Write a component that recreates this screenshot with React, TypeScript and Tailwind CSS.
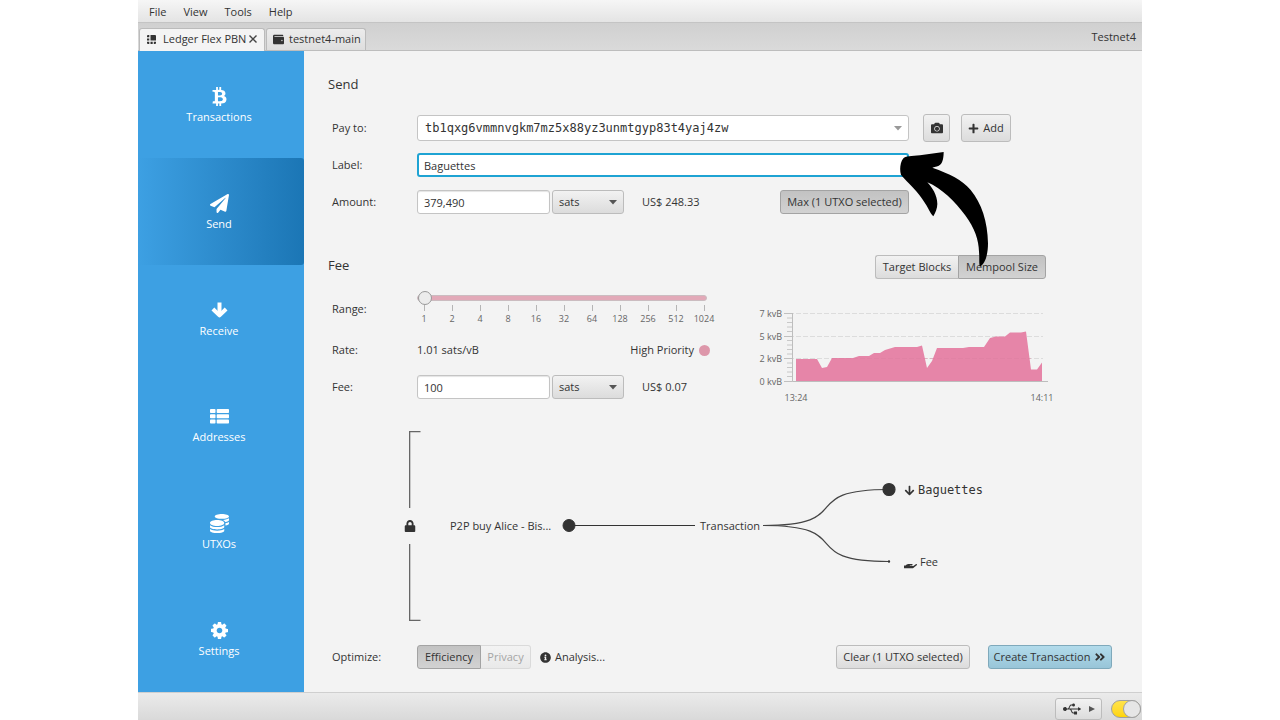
import { useState } from 'react';
import type { ReactNode } from 'react';
import {
  FaAngleDoubleRight,
  FaArrowDown,
  FaBtc,
  FaCamera,
  FaCoins,
  FaHandHolding,
  FaInfoCircle,
  FaLock,
  FaPaperPlane,
  FaPlus,
  FaUsb,
  FaWallet,
} from 'react-icons/fa';

const menus = ['File', 'View', 'Tools', 'Help'];

const navItems = [
  { label: 'Transactions', icon: <FaBtc size={19} /> },
  { label: 'Send', icon: <FaPaperPlane size={19} /> },
  { label: 'Receive', icon: <ReceiveIcon /> },
  { label: 'Addresses', icon: <ListIcon /> },
  { label: 'UTXOs', icon: <FaCoins size={19} /> },
  { label: 'Settings', icon: <CogIcon /> },
];

const feeRates = [1, 2, 4, 8, 16, 32, 64, 128, 256, 512, 1024];

const raised = 'border border-[#bcbcbc] bg-linear-to-b from-[#f2f2f2] to-[#dcdcdc]';
const pressed = 'border border-[#a3a3a3] bg-linear-to-b from-[#c2c2c2] to-[#d2d2d2]';
const field =
  'h-6 rounded-[3px] border border-[#c4c4c4] bg-white px-[6px] text-[#333] outline-none shadow-[inset_0_1px_1px_#e4e4e4]';

function Row({ label, htmlFor, children }: { label: string; htmlFor?: string; children: ReactNode }) {
  return (
    <div className="flex min-h-7 items-center">
      <label htmlFor={htmlFor} className="w-[85px] shrink-0">
        {label}
      </label>
      {children}
    </div>
  );
}

function UnitSelect({ label }: { label: string }) {
  return (
    <div className="relative ml-[2px] w-[72px]">
      <select aria-label={label} className={`h-6 w-full appearance-none rounded-[3px] px-[6px] outline-none ${raised}`}>
        <option>sats</option>
        <option>BTC</option>
      </select>
      <Caret className="pointer-events-none absolute top-[10px] right-[7px] text-[#555]" />
    </div>
  );
}

function Caret({ className }: { className?: string }) {
  return (
    <svg width="8" height="5" viewBox="0 0 8 5" fill="currentColor" className={className}>
      <path d="M0 0h8L4 4.5z" />
    </svg>
  );
}

function ReceiveIcon() {
  return (
    <svg width="17" height="19" viewBox="0 0 17 19" fill="none" stroke="currentColor" strokeWidth="4">
      <path d="M8.500 1.500V14" />
      <path d="M1.900 8L8.500 14.400L15.100 8" strokeLinejoin="round" />
    </svg>
  );
}

function ListIcon() {
  return (
    <svg width="19" height="19" viewBox="0 0 19 19" fill="currentColor">
      <rect x="0" y="2" width="5.500" height="4" rx=".8" />
      <rect x="6.700" y="2" width="12.300" height="4" rx=".8" />
      <rect x="0" y="7.300" width="5.500" height="4" rx=".8" />
      <rect x="6.700" y="7.300" width="12.300" height="4" rx=".8" />
      <rect x="0" y="12.600" width="5.500" height="4" rx=".8" />
      <rect x="6.700" y="12.600" width="12.300" height="4" rx=".8" />
    </svg>
  );
}

function CogIcon() {
  return (
    <svg width="17" height="19" viewBox="0 38 1536 1716" fill="currentColor">
      <path d="M1024 896q0-106-75-181t-181-75-181 75-75 181 75 181 181 75 181-75 75-181zm512-109v222q0 12-8 23t-20 13l-185 28q-19 54-39 91 35 50 107 138 10 12 10 25t-9 23q-27 37-99 108t-94 71q-12 0-26-9l-138-108q-44 23-91 38-16 136-29 186-7 28-36 28h-222q-14 0-24.500-8.500t-11.500-21.500l-28-184q-49-16-90-37l-141 107q-10 9-25 9-14 0-25-11-126-114-165-168-7-10-7-23 0-12 8-23 15-21 51-66.500t54-70.500q-27-50-41-99l-183-27q-13-2-21-12.500t-8-23.500v-222q0-12 8-23t19-13l186-28q14-46 39-92-40-57-107-138-10-12-10-24 0-10 9-23 26-36 98.500-107.500t94.500-71.500q13 0 26 10l138 107q44-23 91-38 16-136 29-186 7-28 36-28h222q14 0 24.500 8.500t11.500 21.500l28 184q49 16 90 37l142-107q9-9 24-9 13 0 25 10 129 119 165 170 7 8 7 22 0 12-8 23-15 21-51 66.500t-54 70.500q26 50 41 98l183 28q13 2 21 12.500t8 23.500z" />
    </svg>
  );
}

function DeviceIcon() {
  return (
    <svg width="9" height="9" viewBox="0 0 9 9" fill="#333">
      <path d="M3.500 0H8a1 1 0 0 1 1 1v4.500H3.500zM0 1a1 1 0 0 1 1-1h1.300v2.200H0zM0 3.400h2.300v2.200H0zM0 6.800h2.300V9H1a1 1 0 0 1-1-1zM3.500 6.800h2.200V9H3.500zM6.800 6.800H9V8a1 1 0 0 1-1 1H6.800z" />
    </svg>
  );
}

function PointerArrow() {
  return (
    <svg
      width="93"
      height="120"
      viewBox="528 150 279 360"
      className="pointer-events-none absolute -top-[3px] left-[479px] z-10"
    >
      <path d="M671 156C671 170 669 185 662 193C655 200 646 201 637 203C690 222 725 238 752 270C785 310 803 365 804 430C804 465 795 492 780 500C776 490 779 475 777 455C776 420 765 385 735 345C705 305 665 265 622 247C636 262 652 285 652 312C652 325 646 338 640 349C630 340 622 315 598 285C575 255 555 240 543 224C538 210 541 185 549 176C556 168 575 169 600 166Z" />
    </svg>
  );
}

function MempoolChart() {
  const ticks = [
    { y: 8, label: '7 kvB' },
    { y: 31, label: '5 kvB' },
    { y: 53, label: '2 kvB' },
    { y: 76, label: '0 kvB' },
  ];
  return (
    <svg width="300" height="100" viewBox="0 0 300 100" className="text-[9px]" fill="#666">
      {ticks.map((t) => (
        <g key={t.y}>
          <path d={`M34 ${t.y + 0.5}h254`} stroke="#dcdcdc" strokeDasharray="5 2" />
          <path d={`M29 ${t.y + 0.5}h8`} stroke="#c0c0c0" />
          <text x="27" y={t.y + 4} textAnchor="end">
            {t.label}
          </text>
        </g>
      ))}
      <path
        d="M32 13h5M32 17.500h5M32 22h5M32 26.500h5M32 35.500h5M32 40h5M32 44.500h5M32 49h5M32 58h5M32 62.500h5M32 67h5M32 71.500h5"
        stroke="#c8c8c8"
      />
      <path
        d="M41 76V54H62L67 63L72 62L77 53H98L104 51H114L119 48H125L130 45L140 42H162L167 40.500L172 63L177 56L182 43H208L214 42H229L235 33L241 31.500H250L255 27.500H266L271 26.500L276 64.500H282L287 57.500V76Z"
        fill="#e685a8"
      />
      <path d="M77 53.500H276" stroke="#dc7ea0" strokeDasharray="5 2" opacity="0.4" />
      <path d="M37.500 8V76.500H293" stroke="#bdbdbd" fill="none" />
      <text x="41" y="96" textAnchor="middle">
        13:24
      </text>
      <text x="287" y="96" textAnchor="middle">
        14:11
      </text>
    </svg>
  );
}

function TransactionDiagram() {
  return (
    <div className="mt-[26px] ml-[76px] flex h-[190px] items-center">
      <div className="flex h-full w-[18px] flex-col items-start justify-between">
        <svg width="18" height="77" fill="none" stroke="#666" strokeWidth="1.300">
          <path d="M16.500 .65H5.650V77" />
        </svg>
        <FaLock size={12} />
        <svg width="18" height="77" fill="none" stroke="#666" strokeWidth="1.300">
          <path d="M16.500 76.350H5.650V0" />
        </svg>
      </div>
      <span className="ml-7 w-[101px] whitespace-nowrap">P2P buy Alice - Bis...</span>
      <svg width="134" height="14" className="ml-[11px]" fill="#333" stroke="#333">
        <circle cx="7" cy="6.500" r="6" />
        <path d="M7 6.500H133" strokeWidth="1.200" />
      </svg>
      <span className="mx-1 w-[58px] whitespace-nowrap">Transaction</span>
      <svg width="134" height="88" viewBox="0 0 134 88" fill="none" stroke="#444" strokeWidth="1.200">
        <path d="M1 43.500C97 43.500 32 7.500 127 7.500" />
        <path d="M1 43.500C97 43.500 32 79.500 127 79.500" />
        <circle cx="127" cy="7.500" r="6" fill="#333" stroke="#333" />
        <circle cx="127" cy="79.500" r=".6" fill="#333" stroke="#333" />
      </svg>
      <div className="ml-2 flex flex-col gap-[54px]">
        <div className="flex h-[18px] items-center gap-[3px] font-['DejaVu_Sans_Mono',monospace] text-[12px]">
          <FaArrowDown size={11} />
          Baguettes
        </div>
        <div className="flex h-[18px] items-center gap-[3px]">
          <FaHandHolding size={13} />
          Fee
        </div>
      </div>
    </div>
  );
}

export default function App() {
  const [active, setActive] = useState('Send');
  const [rate, setRate] = useState(0);

  return (
    <div className="min-h-screen bg-white font-['Open_Sans','Noto_Sans',sans-serif] text-[11px] leading-4 text-[#333]">
      <div className="mx-auto flex min-h-screen w-full max-w-[1004px] flex-col bg-[#f3f3f3]">
        <nav className="flex h-[23px] items-center gap-[17px] border-b border-[#c4c4c4] bg-linear-to-b from-[#f6f6f6] to-[#e4e4e4] px-[11px] pt-[2px]">
          {menus.map((m) => (
            <button key={m}>{m}</button>
          ))}
        </nav>

        <header className="flex h-7 items-end border-b border-[#bdbdbd] bg-linear-to-b from-[#d0d0d0] to-[#dadada] pr-[6px] pl-px">
          <div className="-mb-px flex h-[23px] w-[126px] items-center rounded-t-[3px] border border-b-0 border-[#bbb] bg-[#f4f4f4] px-[7px] pb-[2px] whitespace-nowrap">
            <DeviceIcon />
            <button className="ml-[7px]">Ledger Flex PBN</button>
            <button aria-label="Close tab" className="ml-auto">
              <svg width="8" height="8" viewBox="0 0 8 8" stroke="#444" strokeWidth="1.400">
                <path d="M.5.5l7 7M7.500.5l-7 7" />
              </svg>
            </button>
          </div>
          <button className="ml-px flex h-[22px] w-[100px] items-center gap-[5px] rounded-t-[3px] border border-b-0 border-[#bbb] bg-linear-to-b from-[#ececec] to-[#dedede] pb-px pl-[6px] whitespace-nowrap">
            <FaWallet size={11} className="shrink-0" />
            testnet4-main
          </button>
          <span className="ml-auto self-center">Testnet4</span>
        </header>

        <div className="flex flex-1">
          <aside className="flex w-[166px] shrink-0 flex-col bg-[#3da0e3] text-white">
            {navItems.map(({ label, icon }) => (
              <button
                key={label}
                onClick={() => setActive(label)}
                className={`flex flex-1 flex-col items-center justify-center gap-[3px] pt-[3px] pr-1 ${
                  active === label ? 'rounded-r-[3px] bg-linear-to-r from-[#3da0e3] to-[#1b76b5]' : ''
                }`}
              >
                {icon}
                {label}
              </button>
            ))}
          </aside>

          <main className="flex flex-1 flex-col pt-[23px] pr-[30px] pb-[21px] pl-6">
            <h2 className="h-5 text-[13px] leading-5">Send</h2>

            <section className="mt-5 flex flex-col gap-[9px] pl-1">
              <Row label="Pay to:" htmlFor="pay-to">
                <div className="relative w-[492px]">
                  <input
                    id="pay-to"
                    defaultValue="tb1qxg6vmmnvgkm7mz5x88yz3unmtgyp83t4yaj4zw"
                    className="h-[26px] w-full rounded-[3px] border border-[#c4c4c4] bg-white px-[7px] font-['DejaVu_Sans_Mono',monospace] text-[12px] outline-none"
                  />
                  <button aria-label="Recent payees" className="absolute top-[11px] right-[7px]">
                    <Caret className="text-[#999]" />
                  </button>
                </div>
                <button
                  aria-label="Scan QR code"
                  className={`ml-[14px] flex h-7 w-[27px] items-center justify-center rounded-[3px] ${raised}`}
                >
                  <FaCamera size={12} />
                </button>
                <button className={`ml-[11px] flex h-7 w-[50px] items-center justify-center gap-1 rounded-[3px] ${raised}`}>
                  <FaPlus size={11} />
                  Add
                </button>
              </Row>

              <Row label="Label:" htmlFor="label">
                <div className="relative">
                  <input
                    id="label"
                    defaultValue="Baguettes"
                    className="block h-6 w-[492px] rounded-[3px] border-2 border-[#1ea3d3] bg-white px-[5px] outline-none"
                  />
                  <PointerArrow />
                </div>
              </Row>

              <Row label="Amount:" htmlFor="amount">
                <input id="amount" defaultValue="379,490" className={`w-[133px] ${field}`} />
                <UnitSelect label="Amount unit" />
                <span className="ml-[18px]">US$ 248.33</span>
                <button aria-pressed="true" className={`mr-[203px] ml-auto h-6 w-[129px] rounded-[3px] whitespace-nowrap ${pressed}`}>
                  Max (1 UTXO selected)
                </button>
              </Row>
            </section>

            <div className="mt-[37px] flex h-7 items-center justify-between pr-[66px]">
              <h2 className="h-6 text-[13px] leading-5">Fee</h2>
              <div className="flex">
                <button className={`h-6 w-[83px] rounded-l-[3px] border-r-0 whitespace-nowrap ${raised}`}>Target Blocks</button>
                <button aria-pressed="true" className={`h-6 w-[88px] rounded-r-[3px] whitespace-nowrap ${pressed}`}>
                  Mempool Size
                </button>
              </div>
            </div>

            <section className="mt-[10px] flex items-start gap-11 pl-1">
              <div className="flex w-[379px] flex-col gap-[9px]">
                <Row label="Range:" htmlFor="range">
                  <div className="h-9 flex-1">
                    <input
                      id="range"
                      type="range"
                      min={0}
                      max={10}
                      step={1}
                      value={rate}
                      onChange={(e) => setRate(Number(e.target.value))}
                      className="block h-[14px] w-[290px] appearance-none bg-transparent [&::-webkit-slider-runnable-track]:h-[6px] [&::-webkit-slider-runnable-track]:rounded-full [&::-webkit-slider-runnable-track]:border [&::-webkit-slider-runnable-track]:border-[#cbbcc0] [&::-webkit-slider-runnable-track]:bg-[#e2a9b8] [&::-webkit-slider-thumb]:-mt-[5px] [&::-webkit-slider-thumb]:size-[14px] [&::-webkit-slider-thumb]:appearance-none [&::-webkit-slider-thumb]:rounded-full [&::-webkit-slider-thumb]:border [&::-webkit-slider-thumb]:border-[#999] [&::-webkit-slider-thumb]:bg-[#ececec]"
                    />
                    <div className="flex justify-between px-[7px] text-[9px] leading-3 text-[#666]">
                      {feeRates.map((r) => (
                        <div key={r} className="flex w-0 flex-col items-center">
                          <span className="h-[6px] w-px bg-[#b5b5b5]" />
                          <span className="mt-[2px]">{r}</span>
                        </div>
                      ))}
                    </div>
                  </div>
                </Row>
                <Row label="Rate:">
                  <span>1.01 sats/vB</span>
                  <span className="ml-auto">High Priority</span>
                  <span className="mr-px ml-[5px] size-[11px] rounded-full bg-[#dd97aa]" />
                </Row>
                <Row label="Fee:" htmlFor="fee">
                  <input id="fee" defaultValue="100" className={`w-[133px] ${field}`} />
                  <UnitSelect label="Fee unit" />
                  <span className="ml-[18px]">US$ 0.07</span>
                </Row>
              </div>
              <div className="mt-[14px]">
                <MempoolChart />
              </div>
            </section>

            <TransactionDiagram />

            <footer className="mt-auto flex h-7 items-center pl-1">
              <span className="w-[85px]">Optimize:</span>
              <button aria-pressed="true" className={`h-6 w-[64px] rounded-l-[3px] ${pressed}`}>
                Efficiency
              </button>
              <button
                disabled
                className="h-6 w-[50px] rounded-r-[3px] border border-l-0 border-[#dadada] bg-linear-to-b from-[#f3f3f3] to-[#e9e9e9] text-[#a5a5a5]"
              >
                Privacy
              </button>
              <button className="ml-[9px] flex items-center gap-1">
                <FaInfoCircle size={11} />
                Analysis...
              </button>
              <button className={`ml-auto h-6 w-[134px] rounded-[3px] whitespace-nowrap ${raised}`}>Clear (1 UTXO selected)</button>
              <button className="ml-[18px] flex h-6 w-[124px] items-center justify-center gap-1 rounded-[3px] border border-[#7fa9bb] bg-linear-to-b from-[#b2dbeb] to-[#98c5d8] whitespace-nowrap">
                Create Transaction
                <FaAngleDoubleRight size={12} />
              </button>
            </footer>
          </main>
        </div>

        <div className="flex h-7 items-end justify-end border-t border-[#cfcfcf] bg-linear-to-b from-[#ebebeb] to-[#d9d9d9]">
          <button aria-label="USB devices" className={`flex h-[22px] w-[47px] items-center justify-center gap-2 rounded-[3px] ${raised}`}>
            <FaUsb size={18} />
            <svg width="6" height="6" viewBox="0 0 6 6" fill="#555">
              <path d="M0 0l6 3-6 3z" />
            </svg>
          </button>
          <input
            type="checkbox"
            role="switch"
            aria-label="Server connection"
            defaultChecked
            className="relative mr-px mb-[2px] ml-[9px] h-[18px] w-[30px] appearance-none rounded-full border border-[#a0a0a0] bg-linear-to-b from-[#ffe34a] to-[#ffd500] before:absolute before:-top-px before:-right-px before:size-[18px] before:rounded-full before:border before:border-[#a0a0a0] before:bg-[#e6e6e6]"
          />
        </div>
      </div>
    </div>
  );
}
